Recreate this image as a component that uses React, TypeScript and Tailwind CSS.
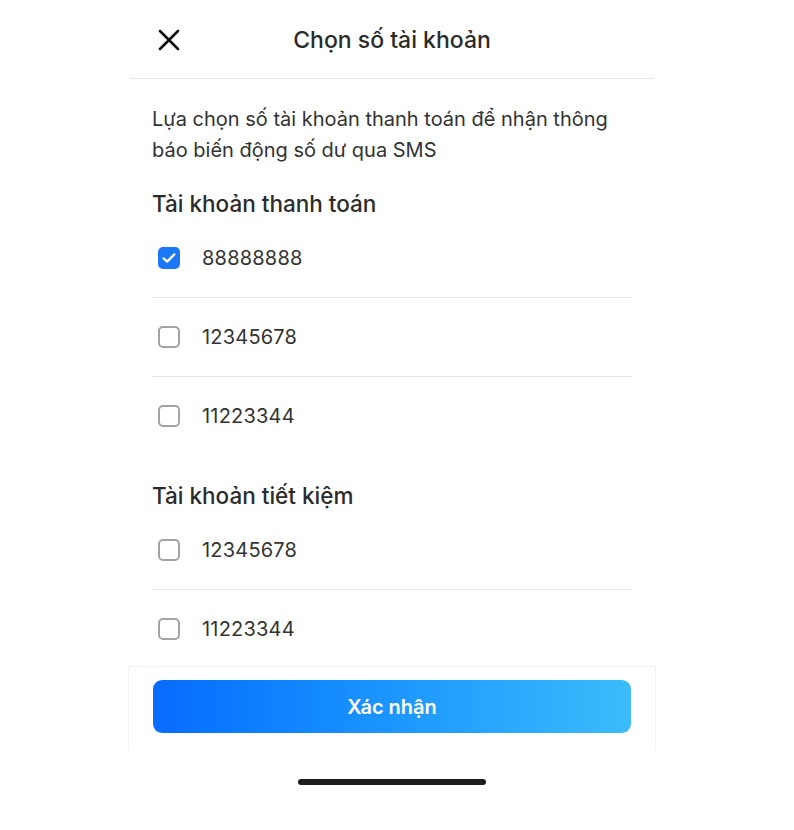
import { useState } from 'react';

type Account = { id: string; number: string };

const paymentAccounts: Account[] = [
  { id: 'p1', number: '88888888' },
  { id: 'p2', number: '12345678' },
  { id: 'p3', number: '11223344' },
];

const savingAccounts: Account[] = [
  { id: 's1', number: '12345678' },
  { id: 's2', number: '11223344' },
];

const CheckBox = ({ checked }: { checked: boolean }) =>
  checked ? (
    <span className="flex h-[22px] w-[22px] items-center justify-center rounded-[5px] bg-[#1a78f7]">
      <svg width="16" height="16" viewBox="0 0 24 24" fill="none" stroke="white" strokeWidth="3.4" strokeLinecap="round" strokeLinejoin="round">
        <path d="M4 12.5l5.2 5L20 6.5" />
      </svg>
    </span>
  ) : (
    <span className="block h-[22px] w-[22px] rounded-[5px] border-2 border-[#a3a3a3] bg-white" />
  );

const AccountRow = ({
  account,
  checked,
  last,
  onToggle,
}: {
  account: Account;
  checked: boolean;
  last: boolean;
  onToggle: () => void;
}) => (
  <button
    type="button"
    onClick={onToggle}
    className={`flex h-[79px] w-full items-center gap-[22px] pl-[6px] text-left ${last ? 'pb-[1px]' : 'border-b border-[#e6e6e6]'}`}
  >
    <CheckBox checked={checked} />
    <span className="text-[20px] tracking-[0.2px] text-[#333333]">{account.number}</span>
  </button>
);

const App = () => {
  const [selected, setSelected] = useState<string[]>(['p1']);

  const toggle = (id: string) =>
    setSelected((prev) => (prev.includes(id) ? prev.filter((x) => x !== id) : [...prev, id]));

  return (
    <div className="min-h-[830px] w-full bg-white pl-[130px]" style={{ fontFamily: 'Inter, "Noto Sans", sans-serif' }}>
      <div className="flex w-[524px] flex-col">
        {/* header */}
        <div className="relative flex h-[79px] items-center justify-center border-b border-[#e8e8e8] pt-[2px]">
          <button type="button" className="absolute left-[26px] top-[27px] p-[2px]">
            <svg width="22" height="22" viewBox="0 0 22 22" fill="none" stroke="#111" strokeWidth="2.6" strokeLinecap="round">
              <path d="M2 2l18 18M20 2L2 20" />
            </svg>
          </button>
          <h1 className="text-[23px] font-medium text-[#2b2b2b]">Chọn số tài khoản</h1>
        </div>

        {/* content */}
        <div className="h-[587px] overflow-hidden px-[22px]">
          <p className="mt-[25px] text-[20px] leading-[31px] text-[#333333]">
            Lựa chọn số tài khoản thanh toán để nhận thông báo biến động số dư qua SMS
          </p>

          <h2 className="mt-[23px] text-[22.5px] font-medium leading-[30px] text-[#2b2b2b]">Tài khoản thanh toán</h2>
          <div>
            {paymentAccounts.map((a, i) => (
              <AccountRow
                key={a.id}
                account={a}
                checked={selected.includes(a.id)}
                last={i === paymentAccounts.length - 1}
                onToggle={() => toggle(a.id)}
              />
            ))}
          </div>

          <h2 className="mt-[25px] text-[22.5px] font-medium leading-[30px] text-[#2b2b2b]">Tài khoản tiết kiệm</h2>
          <div>
            {savingAccounts.map((a, i) => (
              <AccountRow
                key={a.id}
                account={a}
                checked={selected.includes(a.id)}
                last={i === savingAccounts.length - 1}
                onToggle={() => toggle(a.id)}
              />
            ))}
          </div>
        </div>

        {/* footer */}
        <div className="-mx-[2px] h-[84px] border-x border-t border-[#f2f2f2] bg-white px-[24px] pt-[13px]">
          <button
            type="button"
            className="h-[53px] w-full rounded-[9px] bg-gradient-to-r from-[#0a6bff] to-[#3cbcfb] text-[20px] font-semibold text-white"
          >
            Xác nhận
          </button>
        </div>

        <div className="flex h-[69px] items-start justify-center pt-[29px]">
          <span className="block h-[6px] w-[188px] rounded-full bg-[#1c1c1c]" />
        </div>
      </div>
    </div>
  );
};

export default App;
